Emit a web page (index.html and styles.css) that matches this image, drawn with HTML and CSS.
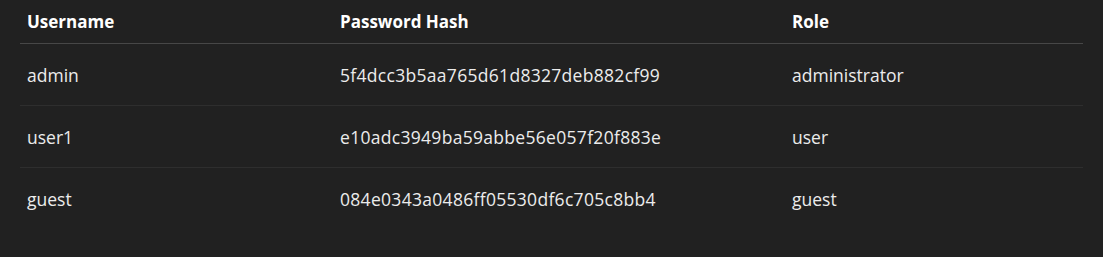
FILE: index.html
```html
<!DOCTYPE html>
<html lang="en">
<head>
    <meta charset="UTF-8">
    <meta name="viewport" content="width=device-width, initial-scale=1.0">
    <title>Users</title>
    <link rel="stylesheet" href="styles.css">
</head>
<body>
    <div class="table-wrap">
        <table class="users-table">
            <thead>
                <tr>
                    <th class="col-user">Username</th>
                    <th class="col-hash">Password Hash</th>
                    <th class="col-role">Role</th>
                </tr>
            </thead>
            <tbody>
                <tr>
                    <td>admin</td>
                    <td class="hash">5f4dcc3b5aa765d61d8327deb882cf99</td>
                    <td>administrator</td>
                </tr>
                <tr>
                    <td>user1</td>
                    <td class="hash">e10adc3949ba59abbe56e057f20f883e</td>
                    <td>user</td>
                </tr>
                <tr>
                    <td>guest</td>
                    <td class="hash">084e0343a0486ff05530df6c705c8bb4</td>
                    <td>guest</td>
                </tr>
            </tbody>
        </table>
    </div>
</body>
</html>
```

FILE: styles.css
```css
body {
    font-family: "Open Sans", "Noto Sans", Arial, sans-serif;
    margin: 0;
    padding: 0;
    background-color: #212121;
    color: #ececec;
}
.table-wrap {
    padding: 0 20px;
}
.users-table {
    width: 100%;
    border-collapse: collapse;
    line-height: 22px;
}
.users-table th {
    text-align: left;
    font-size: 17px;
    font-weight: 700;
    color: #ffffff;
    padding: 11px 7px 10px 7px;
    border-bottom: 1px solid #474747;
}
.users-table td {
    font-size: 17.5px;
    padding: 20px 7px 19px 7px;
    border-bottom: 1px solid #2e2e2e;
}
.users-table tbody tr:last-child td {
    border-bottom: none;
}
.users-table td.hash {
    letter-spacing: 0.3px;
}
.col-user {
    width: 299px;
}
.col-hash {
    width: 438px;
}
```
